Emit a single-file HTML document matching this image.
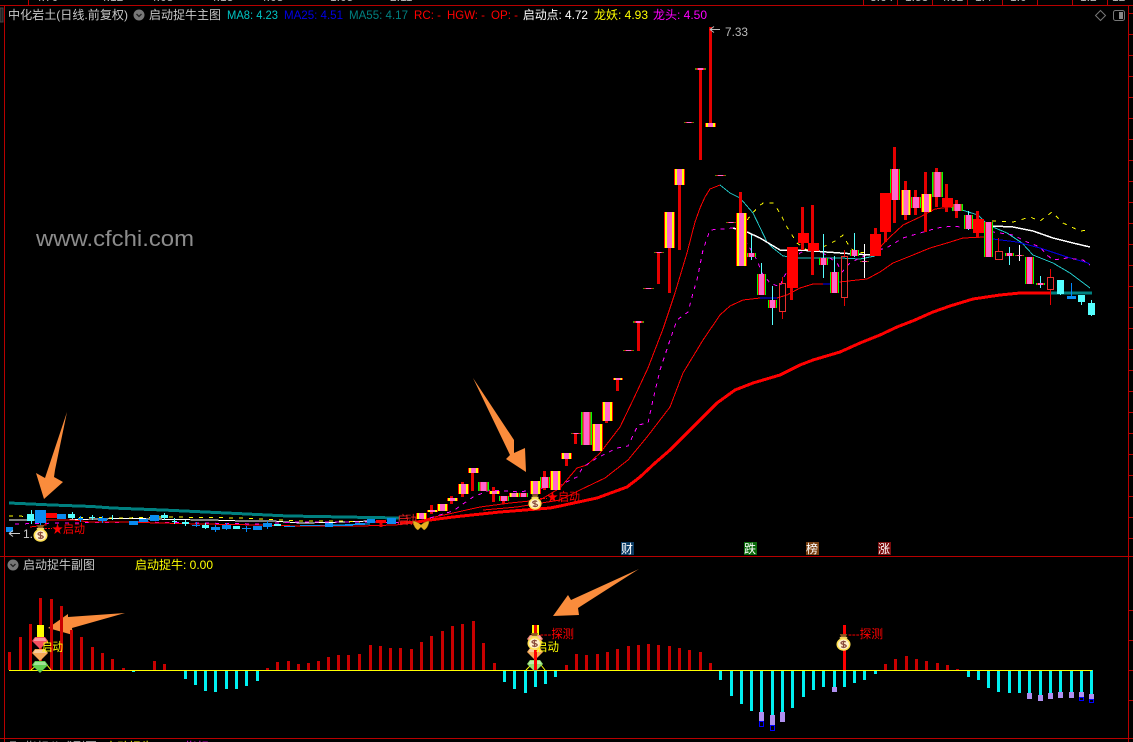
<!DOCTYPE html>
<html><head><meta charset="utf-8">
<style>
html,body{margin:0;padding:0;background:#000;width:1133px;height:742px;overflow:hidden}
svg{display:block}
text{font-family:"Liberation Sans","WenQuanYi Zen Hei","Noto Sans CJK SC",sans-serif;font-size:12px}
.r{shape-rendering:crispEdges}
</style></head><body>
<svg width="1133" height="742" viewBox="0 0 1133 742" xmlns="http://www.w3.org/2000/svg">
<defs>
<linearGradient id="y" x1="0" x2="1" y1="0" y2="0">
<stop offset="0" stop-color="#f00"/><stop offset=".09" stop-color="#f00"/><stop offset=".09" stop-color="#ff0"/><stop offset=".27" stop-color="#ff0"/><stop offset=".27" stop-color="#ff66cc"/><stop offset=".73" stop-color="#ff66cc"/><stop offset=".73" stop-color="#ff0"/><stop offset=".91" stop-color="#ff0"/><stop offset=".91" stop-color="#f00"/><stop offset="1" stop-color="#f00"/>
</linearGradient>
<linearGradient id="g" x1="0" x2="1" y1="0" y2="0">
<stop offset="0" stop-color="#0f0"/><stop offset=".12" stop-color="#0f0"/><stop offset=".12" stop-color="#f00"/><stop offset=".22" stop-color="#f00"/><stop offset=".22" stop-color="#ff66cc"/><stop offset=".78" stop-color="#ff66cc"/><stop offset=".78" stop-color="#f00"/><stop offset=".88" stop-color="#f00"/><stop offset=".88" stop-color="#0f0"/><stop offset="1" stop-color="#0f0"/>
</linearGradient>
<linearGradient id="d" x1="0" x2="1" y1="0" y2="0">
<stop offset="0" stop-color="#0c0"/><stop offset=".2" stop-color="#f00"/><stop offset=".3" stop-color="#ff66cc"/><stop offset=".7" stop-color="#ff66cc"/><stop offset=".8" stop-color="#f00"/><stop offset="1" stop-color="#0c0"/>
</linearGradient>
<symbol id="bag" viewBox="0 0 16 18" overflow="visible">
<path d="M4 0h8l-2 4H6z" fill="#8a5a20"/>
<path d="M4 3h8v2H4z" fill="#f0d060"/>
<ellipse cx="8" cy="11" rx="7.500" ry="6.800" fill="#ffe050"/>
<ellipse cx="8" cy="11" rx="5.800" ry="5.300" fill="#fff0c8"/>
<path d="M10.500 8.500Q8 7 6 8.500T8 11t2.500 2.500T5.500 13.500M8 7v8" fill="none" stroke="#8a4a3a" stroke-width="1.300"/>
</symbol>
<symbol id="gem" viewBox="0 0 16 12" overflow="visible">
<path d="M3 0h10l3 4-8 8-8-8z"/>
<path d="M3 1h10l1.500 3h-13z" fill="#fff" opacity=".4"/>
</symbol>
</defs>
<rect width="1133" height="742" fill="#000"/>

<!-- frame -->
<g fill="#b80000" class="r">
<rect x="0" y="5" width="1133" height="1"/>
<rect x="0" y="556" width="1133" height="1"/>
<rect x="0" y="738" width="1133" height="1"/>
<rect x="4" y="5" width="1" height="737"/>
<rect x="1128" y="5" width="1" height="737"/>
<rect x="28" y="0" width="1" height="5"/>
<rect x="863" y="0" width="1" height="5"/><rect x="897" y="0" width="1" height="5"/><rect x="932" y="0" width="1" height="5"/><rect x="967" y="0" width="1" height="5"/><rect x="1002" y="0" width="1" height="5"/><rect x="1037" y="0" width="1" height="5"/><rect x="1072" y="0" width="1" height="5"/><rect x="1107" y="0" width="1" height="5"/>
</g>
<rect class="r" x="0" y="8" width="3" height="14" fill="#222" stroke="#444" stroke-width="1"/>
<path class="r" d="M1129 13.500h4M1129 34.500h4M1129 55.500h4M1129 76.500h4M1129 97.500h4M1129 118.500h4M1129 139.500h4M1129 160.500h4M1129 181.500h4M1129 202.500h4M1129 223.500h4M1129 244.500h4M1129 265.500h4M1129 286.500h4M1129 307.500h4M1129 328.500h4M1129 349.500h4M1129 370.500h4M1129 391.500h4M1129 412.500h4M1129 433.500h4M1129 454.500h4M1129 475.500h4M1129 496.500h4M1129 517.500h4M1129 538.500h4M1129 610.500h4M1129 640.500h4M1129 670.500h4M1129 700.500h4" stroke="#b80000" fill="none"/>

<!-- clipped fragments top / bottom -->
<g fill="#bbb">
<text x="870" y="1" font-size="10">3.64</text><text x="905" y="1">1.53</text><text x="940" y="1">4.02</text><text x="975" y="1">1.4</text><text x="1010" y="1">1.0</text><text x="1080" y="1">1.2</text><text x="1112" y="1">12</text>
<text x="35" y="1">4.70</text><text x="100" y="1">4.12</text><text x="150" y="1">4.08</text><text x="210" y="1">4.13</text><text x="260" y="1">4.08</text><text x="330" y="1">1.05</text><text x="390" y="1">2.11</text>
<text x="25" y="751">指标公式副图</text>
</g>
<rect class="r" x="10" y="741" width="6" height="1" fill="#666"/>
<text x="105" y="751" fill="#ff0">启动捉牛</text><text x="185" y="751" fill="#f0f">指标</text>

<!-- header -->
<text x="8" y="19" fill="#c8c8c8" textLength="120" lengthAdjust="spacingAndGlyphs">中化岩土(日线.前复权)</text>
<circle cx="139" cy="15" r="5.500" fill="#777"/><path d="M136.500 14l2.500 2.500 2.500-2.500" fill="none" stroke="#222" stroke-width="1.300"/>
<text x="149" y="19" fill="#c8c8c8" textLength="72" lengthAdjust="spacingAndGlyphs">启动捉牛主图</text>
<text x="227" y="19" fill="#00c4c4" textLength="51" lengthAdjust="spacingAndGlyphs">MA8: 4.23</text>
<text x="284" y="19" fill="#0000e6" textLength="59" lengthAdjust="spacingAndGlyphs">MA25: 4.51</text>
<text x="349" y="19" fill="#008080" textLength="59" lengthAdjust="spacingAndGlyphs">MA55: 4.17</text>
<text x="414" y="19" fill="#f00" textLength="27" lengthAdjust="spacingAndGlyphs">RC: -</text>
<text x="447" y="19" fill="#f00" textLength="38" lengthAdjust="spacingAndGlyphs">HGW: -</text>
<text x="491" y="19" fill="#f00" textLength="27" lengthAdjust="spacingAndGlyphs">OP: -</text>
<text x="523" y="19" fill="#fff" textLength="65" lengthAdjust="spacingAndGlyphs">启动点: 4.72</text>
<text x="594" y="19" fill="#ff0" textLength="54" lengthAdjust="spacingAndGlyphs">龙妖: 4.93</text>
<text x="653" y="19" fill="#f0f" textLength="54" lengthAdjust="spacingAndGlyphs">龙头: 4.50</text>
<path d="M1100.500 10.500l5 5-5 5-5-5z" fill="none" stroke="#777"/>
<rect x="1113.500" y="10.500" width="11" height="10" rx="2" fill="none" stroke="#777"/><rect x="1119" y="12" width="4" height="7" fill="#888"/>

<text x="36" y="246" fill="#8c8c8c" style="font-size:22px" textLength="158" lengthAdjust="spacingAndGlyphs">www.cfchi.com</text>

<!-- moving averages -->
<g fill="none" stroke-linejoin="round" class="r">
<polyline stroke="#008080" stroke-width="3" points="9,503 20,503.500 52,505 92,506.500 112,508 163,510 205,512 247,514 288,516 318,516.500 370,517.500 400,518"/>
<polyline stroke="#fff" stroke-width="1" points="9,520 33,520 60,520 118,518.500 138,518.500 170,519.500 210,520 243,521 273,521 300,523 330,522.500 370,521"/>
<polyline stroke="#ff0" stroke-width="1" stroke-dasharray="4 6" points="9,516 60,517 120,518 170,517 240,518 300,521 340,521 360,522"/>
<polyline stroke="#f0f" stroke-width="1" stroke-dasharray="4 6" points="15,524 60,523 140,522 200,523 260,524 300,522 370,522 410,523"/>
<polyline stroke="#0af" stroke-width="1" points="290,526 320,525.500 370,524"/>
<polyline stroke="#f00" stroke-width="1" points="30,527 46,525 46,520 73,520 90,522 120,522 200,524 260,525 300,526 360,526 395,525 415,523"/>

<polyline stroke="#f00" stroke-width="1" points="417,522 430,518 453,513 480,507 510,503 540,500 560,488 577,468 587,465 600,453 620,427 633,400 648,368 663,329 675,293 687,253 695,222 700,208 705,197 710,189 720,185"/>
<polyline stroke="#22c4c4" stroke-width="1" points="720,185 730,193 740,198 753,213 767,242 773,248 783,256 800,258 840,258 860,259 875,256"/>
<polyline stroke="#f00" stroke-width="1" points="875,256 882,245 890,237 903,225 920,217 935,209 950,207 962,210"/>
<polyline stroke="#22c4c4" stroke-width="1" points="962,210 978,215 988,225 1007,233 1022,243 1033,255 1053,263 1070,273 1090,288"/>
<polyline stroke="#f00" stroke-width="1" points="483,510 517,507 560,500 580,490 605,478 628,460 647,437 670,407 683,373 703,340 720,315 730,306 743,300 760,298"/>
<polyline stroke="#00f" stroke-width="1" points="760,298 777,298"/>
<polyline stroke="#f00" stroke-width="1" points="777,298 787,295 800,288 813,284 823,284"/>
<polyline stroke="#00f" stroke-width="1" points="823,284 832,284 840,282"/>
<polyline stroke="#f00" stroke-width="1" points="840,282 857,280 867,279 880,272 893,263 913,255 930,248 947,243 963,238 985,237"/>
<polyline stroke="#0000e0" stroke-width="1" points="985,238 993,239 1017,242 1040,248 1067,257 1088,263 1090,265"/>
<polyline stroke="#f0f" stroke-width="1" stroke-dasharray="4 5" points="430,518 453,511 473,497 490,490 520,492 560,485 577,477 583,467 597,458 617,448 628,446 638,425 648,423 653,400 660,370 670,340 677,320 688,312 693,293 697,280 703,250 710,230 733,228"/>
<polyline stroke="#f0f" stroke-width="1" stroke-dasharray="4 5" points="745,240 757,260 762,273 770,283 780,287 783,278 800,253 813,247 823,253 837,263 842,272 850,263 860,258 873,252 888,247 903,238 920,233 937,228 953,226 975,229 993,232 1013,235 1027,242 1040,247 1047,255 1053,260 1067,258 1083,260 1090,265"/>
<polyline stroke="#ff0" stroke-width="1" stroke-dasharray="4 6" points="747,220 757,208 763,203 773,203 780,213 787,227 797,243 810,252 823,247 837,240 843,235 850,248 858,253 867,252"/>
<polyline stroke="#ff0" stroke-width="1" stroke-dasharray="4 6" points="992,221 1013,222 1030,217 1040,221 1052,212 1063,223 1080,231 1090,230"/>
<polyline stroke="#fff" stroke-width="1.500" points="733,228 747,232 760,238 780,250 800,250 840,253 870,255"/>
<polyline stroke="#fff" stroke-width="1.500" points="993,226 1013,227 1033,231 1053,238 1073,243 1090,247"/>
<polyline stroke="#f00" stroke-width="3" points="400,523 417,522 430,520 453,517 500,512 550,508 560,506 597,498 627,487 640,477 655,463 670,450 685,435 700,420 717,403 735,390 753,383 780,375 800,365 813,360 840,352 860,343 880,335 897,327 915,320 933,312 950,306 973,299 1000,295 1020,293 1052,293"/>
<polyline stroke="#008080" stroke-width="3" points="1050,293 1092,293"/>
</g>

<!-- wicks -->
<path class="r" fill="none" stroke="#e60000" stroke-width="3" d="M710.500 27V123M700.500 69V160M679.500 185V250M669.500 248V293M658.500 252V284M638.500 321V351M617.500 378V391M606.500 421V423M575.500 433V444M566.500 459V466M544.500 471V490M493.500 487V502M472.500 473V491M462.500 482V497M451.500 496V504M431.500 505V514M740.500 192V213M791.500 288V300M802.500 207V250M812.500 205V275M875.500 228V234M885.500 232V242M894.500 147V223M905.500 181V220M915.500 190V215M925.500 172V232M936.500 168V207M946.500 184V212M956.500 200V218M977.500 211V238M503.500 501V504M381 523V527"/>
<path class="r" fill="none" stroke="#e60000" stroke-width="1" d="M782.500 277V283M782.500 311V319M844.500 250V256M844.500 297V306M998.500 238V251M1050.500 269V277M1050.500 289V305"/>
<path class="r" fill="none" stroke="#5ff" stroke-width="1" d="M751.500 235V260M761.500 263V295M772.500 286V325M823.500 234V278M834.500 256V293M854.500 233V257M968.500 211V230M1009.500 247V265M1040.500 276V288M1091.500 300V316M1081.500 295V305M1060.500 294V295M31.500 510V524M72.500 512V519M92.500 515V520M112.500 515V520M164.500 513V520M174.500 518V524M185.500 520V526M205.500 523V529"/>
<path class="r" fill="none" stroke="#fff" stroke-width="1" d="M864.500 244V278M1019.500 245V261"/>
<path class="r" fill="none" stroke="#08f" stroke-width="1" d="M40.500 520V527M80.500 516V522M102.500 516V523M196.500 522V527M215.500 525V532M226.500 523V530M246.500 526V532M267.500 521V529M1071.500 283V296"/>

<!-- candle bodies -->
<g class="r">
<g fill="url(#y)">
<rect x="705" y="123" width="11" height="4"/><rect x="674" y="169" width="11" height="16"/><rect x="664" y="212" width="11" height="36"/><rect x="736" y="213" width="11" height="53"/><rect x="613" y="378" width="10" height="2"/><rect x="602" y="402" width="11" height="19"/><rect x="592" y="424" width="11" height="27"/><rect x="561" y="453" width="11" height="6"/><rect x="550" y="471" width="11" height="19"/><rect x="530" y="481" width="11" height="13"/><rect x="509" y="493" width="10" height="4"/><rect x="489" y="491" width="11" height="3"/><rect x="468" y="468" width="11" height="5"/><rect x="458" y="484" width="11" height="10"/><rect x="447" y="498" width="11" height="3"/><rect x="437" y="504" width="11" height="7"/><rect x="427" y="510" width="11" height="2"/><rect x="416" y="513" width="11" height="6"/><rect x="901" y="190" width="10" height="25"/><rect x="921" y="194" width="11" height="18"/>
</g>
<g fill="url(#g)">
<rect x="581" y="412" width="11" height="33"/><rect x="540" y="477" width="10" height="11"/><rect x="478" y="482" width="11" height="9"/><rect x="499" y="496" width="10" height="5"/><rect x="519" y="493" width="9" height="4"/><rect x="757" y="274" width="9" height="21"/><rect x="768" y="300" width="9" height="8"/><rect x="819" y="258" width="9" height="7"/><rect x="830" y="272" width="9" height="21"/><rect x="850" y="250" width="9" height="6"/><rect x="890" y="169" width="10" height="31"/><rect x="911" y="197" width="10" height="11"/><rect x="932" y="172" width="11" height="25"/><rect x="952" y="204" width="11" height="7"/><rect x="964" y="215" width="9" height="14"/><rect x="984" y="222" width="9" height="35"/><rect x="1025" y="257" width="9" height="27"/><rect x="747" y="253" width="9" height="4"/><rect x="1005" y="253" width="9" height="3"/><rect x="1036" y="283" width="9" height="2"/>
</g>
<g fill="url(#d)">
<rect x="695" y="68" width="11" height="2"/><rect x="684" y="122" width="10" height="1"/><rect x="715" y="175" width="11" height="1"/><rect x="726" y="222" width="10" height="1"/><rect x="654" y="252" width="10" height="1"/><rect x="643" y="288" width="11" height="1"/><rect x="633" y="321" width="11" height="2"/><rect x="623" y="350" width="11" height="1"/><rect x="571" y="433" width="10" height="1"/><rect x="860" y="261" width="9" height="1"/><rect x="1015" y="255" width="9" height="1"/>
</g>
<g fill="#f00">
<rect x="787" y="247" width="11" height="41"/><rect x="798" y="233" width="11" height="10"/><rect x="808" y="243" width="11" height="8"/><rect x="870" y="234" width="11" height="22"/><rect x="880" y="193" width="11" height="39"/><rect x="942" y="198" width="11" height="9"/><rect x="973" y="219" width="11" height="14"/>
<rect x="46" y="513" width="11" height="5"/><rect x="376" y="520" width="10" height="3"/>
</g>
<g fill="none" stroke="#e83030">
<rect x="779.500" y="283.500" width="6" height="28"/><rect x="841.500" y="256.500" width="6" height="41"/><rect x="995.500" y="251.500" width="7" height="8"/><rect x="1047.500" y="277.500" width="6" height="12"/>
</g>
<g fill="#0a8cf0">
<rect x="6" y="527" width="7" height="5"/><rect x="35" y="510" width="11" height="13"/><rect x="57" y="514" width="9" height="5"/><rect x="78" y="518" width="5" height="2"/><rect x="98" y="518" width="9" height="3"/><rect x="129" y="521" width="9" height="4"/><rect x="139" y="519" width="9" height="3"/><rect x="150" y="515" width="9" height="6"/><rect x="192" y="525" width="8" height="1"/><rect x="211" y="527" width="9" height="3"/><rect x="222" y="525" width="9" height="4"/><rect x="242" y="528" width="9" height="1"/><rect x="253" y="526" width="9" height="4"/><rect x="263" y="523" width="9" height="4"/><rect x="284" y="526" width="11" height="1"/><rect x="300" y="525" width="20" height="1"/><rect x="325" y="523" width="8" height="4"/><rect x="333" y="525" width="12" height="1"/><rect x="345" y="524" width="8" height="2"/><rect x="355" y="523" width="10" height="2"/><rect x="367" y="519" width="8" height="4"/><rect x="387" y="518" width="9" height="6"/><rect x="1067" y="296" width="9" height="3"/>
</g>
<g fill="#5ff">
<rect x="27" y="514" width="7" height="7"/><rect x="68" y="514" width="7" height="4"/><rect x="90" y="517" width="5" height="1"/><rect x="161" y="515" width="7" height="3"/><rect x="172" y="521" width="5" height="1"/><rect x="182" y="522" width="7" height="2"/><rect x="202" y="525" width="7" height="3"/><rect x="233" y="526" width="7" height="3"/><rect x="274" y="524" width="7" height="2"/><rect x="1057" y="280" width="7" height="14"/><rect x="1078" y="295" width="7" height="7"/><rect x="1088" y="303" width="7" height="12"/>
</g>
</g>

<!-- 7.33 and 1.xx labels -->
<path d="M710 29.500h10M710 29.500l4-3M710 29.500l4 3" stroke="#bbb" fill="none"/>
<text x="725" y="36" fill="#bbb" textLength="23" lengthAdjust="spacingAndGlyphs">7.33</text>
<path d="M9 533.500h11M9 533.500l4-3M9 533.500l4 3" stroke="#ccc" fill="none"/>
<text x="23" y="538" fill="#ccc">1.</text>

<!-- labels and icons in main chart -->
<path d="M45 528.500h7M540 498.500h7" stroke="#f00" stroke-dasharray="2 1" fill="none"/>
<text x="52" y="533" fill="#f00" textLength="33" lengthAdjust="spacingAndGlyphs">★启动</text>
<text x="547" y="501" fill="#f00" textLength="33" lengthAdjust="spacingAndGlyphs">★启动</text>
<text x="397" y="524" fill="#e02020" font-size="11" textLength="20">启动</text>
<use href="#bag" x="33" y="525" width="15" height="17"/>
<use href="#bag" x="528" y="494" width="14" height="16"/>
<path d="M421 525c-3-3-7-4-8-4 0 3 2 8 5 9l3-3 3 3c3-1 5-6 5-9-1 0-5 1-8 4z" fill="#e8b020" stroke="#8a6a10" stroke-width=".5"/>

<!-- event tags -->
<g class="r">
<rect x="621" y="542" width="13" height="13" fill="#0c3c64"/><rect x="744" y="542" width="13" height="13" fill="#0a6a0a"/><rect x="806" y="542" width="13" height="13" fill="#7a4010"/><rect x="878" y="542" width="13" height="13" fill="#7a0c0c"/>
</g>
<g fill="#fff"><text x="621" y="553">财</text><text x="744" y="553">跌</text><text x="806" y="553">榜</text><text x="878" y="553">涨</text></g>

<!-- arrows -->
<g fill="#fa8c3c">
<polygon points="67,412 55,470 54,477 63,482 44,499 36,473 45,478"/>
<polygon points="473,378 514,440 514,453 525,448 526,472 506,459 510,455"/>
<polygon points="48,628 68,614 68,617 125,613 72,628 73,635"/>
<polygon points="553,616 568,595 571,600 639,569 578,608 579,615"/>
</g>

<!-- sub panel -->
<circle cx="13" cy="565" r="5.500" fill="#777"/><path d="M10.500 564l2.500 2.500 2.500-2.500" fill="none" stroke="#222" stroke-width="1.300"/>
<text x="23" y="569" fill="#c8c8c8" textLength="72" lengthAdjust="spacingAndGlyphs">启动捉牛副图</text>
<text x="135" y="569" fill="#ff0" textLength="78" lengthAdjust="spacingAndGlyphs">启动捉牛: 0.00</text>

<path class="r" fill="none" stroke="#c80000" stroke-width="3" d="M9.500 670V652M20.500 670V637M30.500 670V624M40.500 670V598M51.500 670V599M61.500 670V606M71.500 670V630M81.500 670V637M92.500 670V647M102.500 670V653M112.500 670V659M123.500 670V668M154.500 670V661M164.500 670V664M267.500 670V668M277.500 670V662M288.500 670V661M298.500 670V664M308.500 670V663M318.500 670V661M328.500 670V657M338.500 670V655M348.500 670V655M359.500 670V654M370.500 670V645M380.500 670V646M390.500 670V648M400.500 670V648M411.500 670V649M421.500 670V642M431.500 670V636M442.500 670V631M452.500 670V626M462.500 670V624M473.500 670V621M483.500 670V643M494.500 670V663M566.500 670V665M576.500 670V654M586.500 670V655M597.500 670V654M607.500 670V652M617.500 670V649M628.500 670V646M638.500 670V645M648.500 670V644M658.500 670V645M669.500 670V646M679.500 670V648M689.500 670V650M700.500 670V652M710.500 670V663M885.500 670V664M895.500 670V659M906.500 670V656M916.500 670V659M926.500 670V661M937.500 670V663M947.500 670V665M957.500 670V669"/>
<path class="r" fill="none" stroke="#00f0f0" stroke-width="3" d="M133.500 670V672M185.500 670V679M195.500 670V685M205.500 670V691M215.500 670V692M226.500 670V689M236.500 670V689M246.500 670V686M257.500 670V681M504.500 670V682M514.500 670V689M525.500 670V693M535.500 670V687M545.500 670V684M555.500 670V677M720.500 670V680M731.500 670V696M741.500 670V704M751.500 670V711M761.500 670V712M772.500 670V715M782.500 670V712M792.500 670V708M803.500 670V697M813.500 670V690M823.500 670V687M834.500 670V687M844.500 670V687M854.500 670V683M864.500 670V680M875.500 670V674M968.500 670V677M978.500 670V680M988.500 670V688M998.500 670V692M1009.500 670V693M1019.500 670V693M1029.500 670V693M1040.500 670V695M1050.500 670V693M1060.500 670V692M1071.500 670V692M1081.500 670V692M1091.500 670V694"/>
<g class="r" fill="#b090f0">
<rect x="759" y="712" width="5" height="9"/><rect x="770" y="715" width="5" height="10"/><rect x="780" y="712" width="5" height="10"/><rect x="832" y="687" width="5" height="5"/><rect x="1027" y="693" width="5" height="6"/><rect x="1038" y="695" width="5" height="6"/><rect x="1048" y="693" width="5" height="6"/><rect x="1058" y="692" width="5" height="6"/><rect x="1069" y="692" width="5" height="6"/><rect x="1079" y="692" width="5" height="5"/><rect x="1089" y="694" width="5" height="5"/>
</g>
<g class="r" fill="none" stroke="#00f">
<rect x="759.500" y="721.500" width="4" height="5"/><rect x="770.500" y="725.500" width="4" height="5"/><rect x="1079.500" y="697.500" width="4" height="3"/><rect x="1089.500" y="699.500" width="4" height="3"/>
</g>
<rect class="r" x="9" y="670" width="1083" height="1" fill="#ff0"/>

<!-- signal at first start -->
<rect class="r" x="37" y="625" width="7" height="12" fill="#ff0"/>
<path d="M31 670l7-6M51 670l-4-5M526 670l5-5M545 670l-4-5" stroke="#ff0" fill="none"/>
<use href="#gem" x="32" y="637" width="16" height="12" fill="#f45060"/>
<use href="#gem" x="32" y="649" width="16" height="12" fill="#f4a858"/>
<use href="#gem" x="32" y="661" width="16" height="12" fill="#60d050"/>
<text x="42" y="651" fill="#ff0" textLength="21" lengthAdjust="spacingAndGlyphs">启动</text>

<!-- signal at second start -->
<rect class="r" x="532" y="625" width="7" height="11" fill="#ff0"/>
<rect class="r" x="534" y="625" width="3" height="11" fill="#e60000"/>
<use href="#gem" x="527" y="635" width="16" height="12" fill="#f08070"/>
<use href="#gem" x="527" y="648" width="16" height="12" fill="#f4a858"/>
<use href="#gem" x="527" y="660" width="16" height="12" fill="#90e070"/>
<path class="r" d="M535.500 650V670" stroke="#f00" stroke-width="3" fill="none"/>
<text x="536" y="651" fill="#ff0" textLength="23" lengthAdjust="spacingAndGlyphs">启动</text>
<use href="#bag" x="527" y="633" width="15" height="17"/>
<text x="540" y="638" fill="#f00" textLength="34" lengthAdjust="spacingAndGlyphs">---探测</text>

<!-- third -->
<rect class="r" x="843" y="625" width="3" height="45" fill="#f00"/>
<use href="#bag" x="836" y="634" width="15" height="17"/>
<text x="848" y="638" fill="#f00" textLength="35" lengthAdjust="spacingAndGlyphs">---探测</text>
</svg>
</body></html>
